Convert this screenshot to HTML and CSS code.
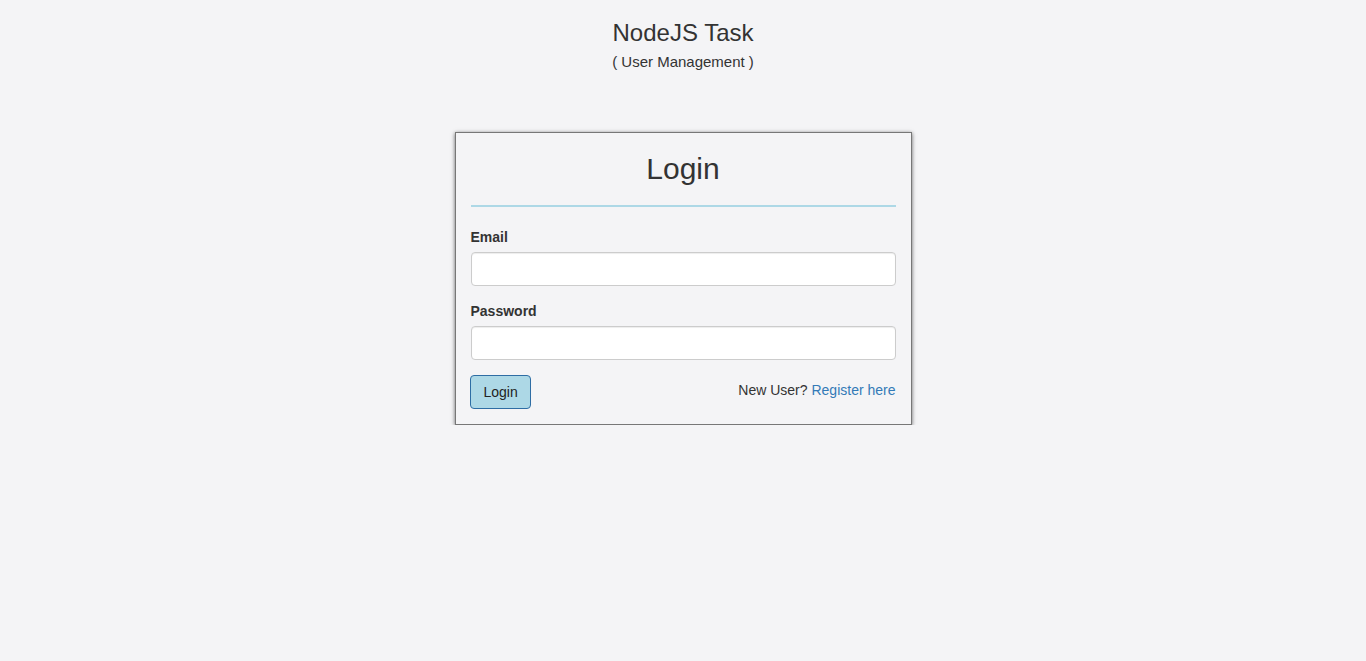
FILE: index.html
```html
<!DOCTYPE html>
<html>
<head>
<meta charset="utf-8">
<title>NodeJS Task</title>
<link rel="stylesheet" href="styles.css">
</head>
<body>
<header class="site-header">
  <h3 class="site-title">NodeJS Task</h3>
  <p class="site-subtitle">( User Management )</p>
</header>
<main class="login-wrap">
  <div class="login-card">
    <h2 class="login-title">Login</h2>
    <hr class="login-rule">
    <form class="login-form">
      <div class="form-group">
        <label class="form-label" for="email">Email</label>
        <input class="form-input" id="email" type="email">
      </div>
      <div class="form-group">
        <label class="form-label" for="password">Password</label>
        <input class="form-input" id="password" type="password">
      </div>
      <div class="form-actions">
        <button class="btn-login" type="button">Login</button>
        <span class="register-text">New User? <a class="register-link" href="#">Register here</a></span>
      </div>
    </form>
  </div>
</main>
</body>
</html>
```
FILE: styles.css
```css
* { box-sizing: border-box; }
html, body {
  margin: 0;
  padding: 0;
  background: #f4f4f6;
  color: #333;
  font-family: "Liberation Sans", Arial, Helvetica, sans-serif;
  font-size: 14px;
  line-height: 20px;
}
.site-header {
  text-align: center;
}
.site-title {
  margin: 20px 0 0;
  font-size: 24px;
  font-weight: 400;
  line-height: 26px;
}
.site-subtitle {
  margin: 6px 0 0;
  font-size: 15px;
  line-height: 20px;
}
.login-wrap {
  display: flex;
  justify-content: center;
  padding-top: 60px;
}
.login-card {
  width: 457px;
  background: #f4f4f6;
  border: 1px solid #777;
  box-shadow: 0 1px 4px rgba(0,0,0,0.6);
  padding: 15px;
}
.login-title {
  margin: 4px 0 0;
  text-align: center;
  font-size: 30px;
  font-weight: 400;
  line-height: 33px;
}
.login-rule {
  margin: 20px 0;
  border: 0;
  height: 2px;
  background: #add8e6;
}
.form-group {
  margin-bottom: 15px;
}
.form-label {
  display: block;
  font-weight: 700;
  margin-bottom: 5px;
}
.form-input {
  display: block;
  width: 100%;
  height: 34px;
  padding: 6px 12px;
  font-family: inherit;
  font-size: 14px;
  background: #fff;
  border: 1px solid #ccc;
  border-radius: 4px;
  box-shadow: inset 0 1px 1px rgba(0,0,0,0.075);
}
.form-actions {
  display: flex;
  justify-content: space-between;
  align-items: flex-start;
}
.btn-login {
  height: 34px;
  margin-left: -1px;
  padding: 6px 12px 6px 13px;
  font-family: inherit;
  font-size: 14px;
  line-height: 20px;
  color: #222;
  background: #add8e6;
  border: 1px solid #2e6da4;
  border-radius: 4px;
}
.register-text {
  margin-top: 5px;
  color: #333;
}
.register-link {
  color: #337ab7;
  text-decoration: none;
}
```
